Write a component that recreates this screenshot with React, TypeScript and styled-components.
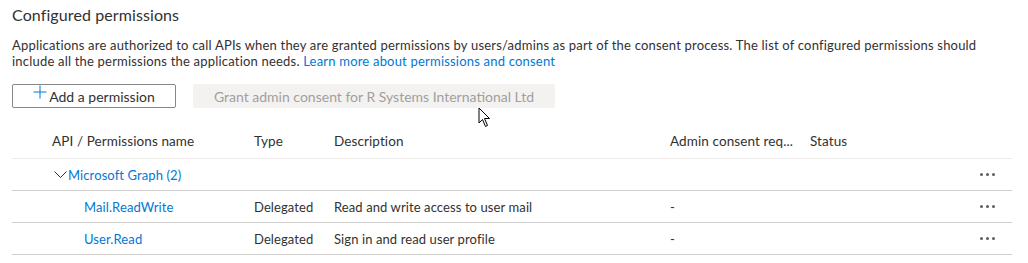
import React from "react";
import styled, { createGlobalStyle } from "styled-components";

const Global = createGlobalStyle`
  html, body { margin: 0; padding: 0; background: #ffffff; }
  body { font-family: "Lato", "Open Sans", sans-serif; color: #323130; }
`;

const Page = styled.div`
  padding: 4px 12px 0 12px;
  width: 1000px;
  position: relative;
`;

const Title = styled.h2`
  margin: 0;
  font-size: 16px;
  line-height: 22px;
  font-weight: 400;
  color: #323130;
  letter-spacing: 0.1px;
`;

const Desc = styled.p`
  margin: 11px 0 0 0;
  font-size: 13px;
  line-height: 16px;
  color: #323130;
  width: 1000px;
  letter-spacing: 0.2px;
`;

const Link = styled.a`
  color: #0078d4;
  text-decoration: none;
`;

const Toolbar = styled.div`
  display: flex;
  gap: 17px;
  margin-top: 15px;
`;

const Button = styled.button<{ $disabled?: boolean }>`
  height: 24px;
  box-sizing: border-box;
  display: flex;
  align-items: center;
  justify-content: center;
  font-family: inherit;
  font-size: 14px;
  border-radius: 2px;
  padding: 0;
  border: 1px solid ${(p) => (p.$disabled ? "#f3f2f1" : "#8a8886")};
  background: ${(p) => (p.$disabled ? "#f3f2f1" : "#ffffff")};
  color: ${(p) => (p.$disabled ? "#a19f9d" : "#323130")};
  width: ${(p) => (p.$disabled ? "362px" : "164px")};
`;

const PlusIcon = styled.svg`
  width: 14px;
  height: 14px;
  margin-right: 2px;
  align-self: flex-start;
`;

const Table = styled.div`
  margin-top: 19px;
  display: grid;
  grid-template-columns: 242px 80px 336px 140px 156px 46px;
  font-size: 13px;
`;

const Cell = styled.div<{ $head?: boolean; $indent?: number; $blue?: boolean }>`
  height: 32px;
  box-sizing: border-box;
  display: flex;
  align-items: center;
  padding-left: ${(p) => p.$indent ?? 0}px;
  padding-bottom: ${(p) => (p.$head ? 3 : 0)}px;
  border-bottom: 1px solid ${(p) => (p.$head ? "#edebe9" : "#d2d0ce")};
  color: ${(p) => (p.$blue ? "#0078d4" : "#323130")};
  font-size: ${(p) => (p.$head ? "13.5px" : "13px")};
  letter-spacing: 0.1px;
  white-space: nowrap;
`;

const Chevron = styled.svg`
  width: 13px;
  height: 8px;
  margin-right: 1px;
  margin-top: 1px;
`;

const More = styled.div`
  display: flex;
  gap: 3px;
  margin-left: 14px;
  span {
    width: 3px;
    height: 3px;
    border-radius: 50%;
    background: #605e5c;
  }
`;

const Cursor = styled.svg`
  position: absolute;
  left: 478px;
  top: 107px;
  width: 14px;
  height: 21px;
`;

const Dots = () => (
  <More>
    <span />
    <span />
    <span />
  </More>
);

const rows = [
  { name: "Mail.ReadWrite", type: "Delegated", desc: "Read and write access to user mail" },
  { name: "User.Read", type: "Delegated", desc: "Sign in and read user profile" },
];

export default function App() {
  return (
    <>
      <Global />
      <Page>
        <Title>Configured permissions</Title>
        <Desc>
          Applications are authorized to call APIs when they are granted permissions by users/admins as part of the
          consent process. The list of configured permissions should
          <br />
          include all the permissions the application needs. <Link>Learn more about permissions and consent</Link>
        </Desc>
        <Toolbar>
          <Button>
            <PlusIcon viewBox="0 0 14 14">
              <path d="M7 0.5V13.5M0.5 7H13.5" stroke="#0078d4" strokeWidth="1" fill="none" />
            </PlusIcon>
            Add a permission
          </Button>
          <Button $disabled>Grant admin consent for R Systems International Ltd</Button>
        </Toolbar>
        <Table>
          <Cell $head $indent={40}>API / Permissions name</Cell>
          <Cell $head>Type</Cell>
          <Cell $head>Description</Cell>
          <Cell $head>Admin consent req...</Cell>
          <Cell $head>Status</Cell>
          <Cell $head />

          <Cell $indent={42} $blue>
            <Chevron viewBox="0 0 13 8">
              <path d="M0.5 0.5L6.5 6.5L12.5 0.5" stroke="#323130" strokeWidth="1" fill="none" />
            </Chevron>
            Microsoft Graph (2)
          </Cell>
          <Cell />
          <Cell />
          <Cell />
          <Cell />
          <Cell>
            <Dots />
          </Cell>

          {rows.map((r) => (
            <React.Fragment key={r.name}>
              <Cell $indent={72} $blue>{r.name}</Cell>
              <Cell>{r.type}</Cell>
              <Cell>{r.desc}</Cell>
              <Cell>-</Cell>
              <Cell />
              <Cell>
                <Dots />
              </Cell>
            </React.Fragment>
          ))}
        </Table>
        <Cursor viewBox="0 0 14 21">
          <path d="M1 1L1 16L4.5 12.5L7.5 19.5L9.5 18.5L6.5 11.5L11.5 11.5Z" fill="#ffffff" stroke="#000000" strokeWidth="1" strokeLinejoin="miter" />
        </Cursor>
      </Page>
    </>
  );
}
